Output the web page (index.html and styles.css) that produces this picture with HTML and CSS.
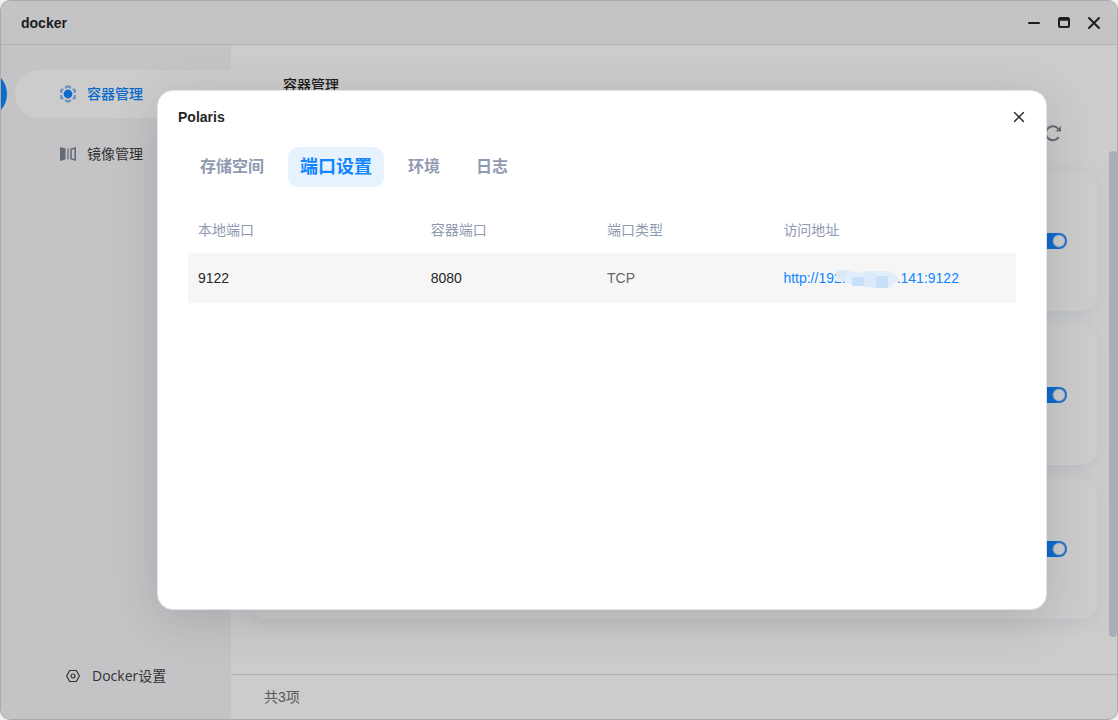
FILE: index.html
```html
<!DOCTYPE html>
<html lang="zh-CN">
<head>
<meta charset="utf-8">
<title>docker</title>
<link rel="stylesheet" href="styles.css">
</head>
<body>
<div class="window">
  <header class="titlebar">
    <h1 class="titlebar-name">docker</h1>
    <div class="titlebar-actions">
      <button class="icon-button" type="button" aria-label="最小化">
        <svg width="14" height="14" viewBox="0 0 14 14"><path d="M2 7h10" stroke="currentColor" stroke-width="2" stroke-linecap="round"/></svg>
      </button>
      <button class="icon-button" type="button" aria-label="最大化">
        <svg width="14" height="14" viewBox="0 0 14 14"><rect x="2" y="2" width="10" height="9" rx="1.5" fill="none" stroke="currentColor" stroke-width="2"/><path d="M2 3.5h10" stroke="currentColor" stroke-width="2.5"/></svg>
      </button>
      <button class="icon-button" type="button" aria-label="关闭">
        <svg width="14" height="14" viewBox="0 0 14 14"><path d="M2 2l10 10M12 2L2 12" stroke="currentColor" stroke-width="2" stroke-linecap="round"/></svg>
      </button>
    </div>
  </header>
  <div class="body">
    <nav class="sidebar">
      <a class="nav-item nav-item-active" href="#containers">
        <svg class="nav-icon" width="18" height="18" viewBox="0 0 18 18"><g fill="none" stroke="#8fbdf5" stroke-width="2.4"><path d="M6 2.900L9 1.300l3 1.600M6 15.100l3 1.600 3-1.600M2.200 8V5.200l2-1.200M15.800 8V5.200l-2-1.200M2.200 10v2.800l2 1.200M15.800 10v2.800l-2 1.200"/></g><circle cx="9" cy="9" r="4.400" fill="#1186ff"/></svg>
        容器管理
      </a>
      <a class="nav-item" href="#images">
        <svg class="nav-icon" width="18" height="18" viewBox="0 0 18 18"><path d="M1 2.500Q1 2 2 2.200l4.500 1.400v10.800L2 15.800Q1 16 1 15.500z" fill="#7f8595"/><path d="M9 3.500v11" stroke="#a5a9b5" stroke-width="1.800"/><path d="M12 4.300L16.200 3v12L12 13.700z" fill="none" stroke="#7f8595" stroke-width="1.600"/></svg>
        镜像管理
      </a>
      <a class="nav-settings" href="#settings">
        <svg width="16" height="16" viewBox="0 0 16 16" fill="none" stroke="currentColor" stroke-width="1.200"><path d="M4.700 2.500h6.600L14.400 8l-3.100 5.500H4.700L1.600 8z" stroke-linejoin="round"/><circle cx="8" cy="8" r="2"/></svg>
        Docker设置
      </a>
    </nav>
    <main class="content">
      <div class="content-head">
        <h2 class="content-title">容器管理</h2>
        <button class="refresh" type="button" aria-label="刷新">
          <svg width="18" height="18" viewBox="0 0 18 18"><path d="M14.800 13A7 7 0 1 1 14.500 5" fill="none" stroke="currentColor" stroke-width="2"/><path d="M17 2v5.500h-5.500z" fill="currentColor"/></svg>
        </button>
      </div>
      <div class="cards">
        <section class="card"><input class="switch" type="checkbox" role="switch" aria-label="容器 1" checked></section>
        <section class="card"><input class="switch" type="checkbox" role="switch" aria-label="容器 2" checked></section>
        <section class="card"><input class="switch" type="checkbox" role="switch" aria-label="容器 3" checked></section>
      </div>
      <footer class="content-foot">共3项</footer>
      <div class="scrollbar"></div>
    </main>
  </div>
</div>

<div class="overlay">
  <div class="dialog" role="dialog" aria-labelledby="dialog-title">
    <header class="dialog-head">
      <h2 class="dialog-title" id="dialog-title">Polaris</h2>
      <button class="icon-button" type="button" aria-label="关闭">
        <svg width="14" height="14" viewBox="0 0 14 14"><path d="M2.500 2.500l9 9M11.500 2.500l-9 9" stroke="currentColor" stroke-width="1.400" stroke-linecap="round"/></svg>
      </button>
    </header>
    <div class="tabs" role="tablist">
      <button class="tab" type="button" role="tab">存储空间</button>
      <button class="tab tab-active" type="button" role="tab" aria-selected="true">端口设置</button>
      <button class="tab" type="button" role="tab">环境</button>
      <button class="tab" type="button" role="tab">日志</button>
    </div>
    <table class="ports">
      <colgroup><col class="col-local"><col class="col-mid"><col class="col-mid"><col></colgroup>
      <thead>
        <tr><th>本地端口</th><th>容器端口</th><th>端口类型</th><th>访问地址</th></tr>
      </thead>
      <tbody>
        <tr>
          <td>9122</td><td>8080</td><td class="muted">TCP</td>
          <td><a class="address" href="#open">http://192.<svg class="mosaic" width="63" height="18" viewBox="0 0 63 18"><path d="M0 0h10l12 3h4V1h26l6 3 5 5-5 4-4 4-17 1-12-3H16L8 11 0 12z" fill="#e2edfa"/><path d="M4 0h6v7H0V2z" fill="#dde8f5"/><path d="M16 7h12v9H16zM40 6h12v12H40z" fill="#c9e0fb"/><path d="M28 3h12v14H28z" fill="#dce9fa"/></svg>.141:9122</a></td>
        </tr>
      </tbody>
    </table>
  </div>
</div>
</body>
</html>
```
FILE: styles.css
```css
* {
  box-sizing: border-box;
}

body {
  margin: 0;
  height: 100vh;
  background: #f0f0f0;
  color: #262626;
  font: 14px/20px "Liberation Sans", "Noto Sans CJK SC", sans-serif;
}

h1,
h2 {
  margin: 0;
  font-size: 14px;
  font-weight: bold;
}

a {
  text-decoration: none;
}

svg {
  display: block;
}

button {
  padding: 0;
  border: 0;
  background: none;
  color: inherit;
  font: inherit;
}

.window {
  display: flex;
  flex-direction: column;
  height: 100vh;
  overflow: hidden;
  border: 1px solid #d5d5d7;
  border-radius: 10px;
  background: #fff;
}

.titlebar {
  display: flex;
  align-items: center;
  justify-content: space-between;
  height: 44px;
  padding: 0 16px 0 20px;
  border-bottom: 1px solid #dedee0;
  background: #f5f5f8;
}

.titlebar-actions {
  display: flex;
  gap: 16px;
}

.icon-button {
  width: 14px;
  height: 14px;
}

.body {
  display: flex;
  flex: 1;
  min-height: 0;
}

.sidebar {
  position: relative;
  display: flex;
  flex-direction: column;
  gap: 12px;
  width: 230px;
  overflow: hidden;
  padding: 25px 0 23px 14px;
  background: #f5f5f8;
}

.nav-item {
  display: flex;
  align-items: center;
  gap: 10px;
  height: 48px;
  padding-left: 44px;
  border-radius: 24px 0 0 24px;
  color: #404040;
}

.nav-item-active {
  background: #fff;
  color: #1186ff;
  font-weight: 500;
}

.nav-item-active::before {
  content: "";
  position: absolute;
  left: -42px;
  width: 48px;
  height: 48px;
  border-radius: 50%;
  background: #1186ff;
}

.nav-settings {
  display: flex;
  align-items: center;
  gap: 11px;
  height: 40px;
  margin-top: auto;
  padding-left: 50px;
  color: #404040;
  font-family: "Open Sans", "Noto Sans CJK SC", sans-serif;
}

.content {
  position: relative;
  display: flex;
  flex: 1;
  flex-direction: column;
  min-width: 0;
}

.content-head {
  display: flex;
  flex-direction: column;
  gap: 29px;
  padding: 30px 55px 29px 52px;
}

.content-title {
  font-weight: 500;
}

.refresh {
  align-self: flex-end;
  width: 18px;
  height: 18px;
  color: #7f8595;
}

.cards {
  display: flex;
  flex: 1;
  flex-direction: column;
  gap: 14px;
  min-height: 0;
  padding: 0 20px;
}

.card {
  display: flex;
  align-items: center;
  justify-content: flex-end;
  height: 140px;
  padding: 0 30px;
  border-radius: 16px;
  background: #fff;
  box-shadow: 0 4px 16px rgba(110, 130, 180, 0.12);
}

.switch {
  appearance: none;
  width: 32px;
  height: 16px;
  margin: 0;
  border-radius: 8px;
  background: radial-gradient(circle at 24px 8px, #fff 5px, #1186ff 7px);
}

.content-foot {
  height: 45px;
  padding: 12px 33px;
  border-top: 1px solid #dedee0;
  color: #707070;
}

.scrollbar {
  position: absolute;
  top: 106px;
  right: 0;
  bottom: 82px;
  width: 8px;
  border-radius: 4px;
  background: #d6dae6;
}

.overlay {
  position: absolute;
  inset: 0;
  display: flex;
  overflow: hidden;
  padding: 90px 71px 110px 157px;
  border-radius: 10px;
  background: rgba(0, 0, 0, 0.2);
}

.dialog {
  flex: 1;
  padding: 0 30px;
  border: 1px solid #e2e2f0;
  border-radius: 16px;
  background: #fff;
  box-shadow: 0 10px 50px rgba(0, 0, 0, 0.14);
}

.dialog-head {
  display: flex;
  align-items: center;
  justify-content: space-between;
  height: 52px;
  margin: 0 -10px;
}

.tabs {
  display: flex;
  gap: 12px;
  padding-top: 4px;
}

.tab {
  height: 40px;
  padding: 0 12px;
  border-radius: 10px;
  color: #909ab0;
  font-size: 16px;
  font-weight: bold;
}

.tab-active {
  background: #e7f2ff;
  color: #1186ff;
  font-size: 18px;
  font-weight: bold;
}

.ports {
  width: 100%;
  margin-top: 20px;
  border-collapse: collapse;
  table-layout: fixed;
  text-align: left;
}

.col-local {
  width: 28.1%;
}

.col-mid {
  width: 21.3%;
}

.ports th {
  height: 46px;
  padding: 0 10px;
  color: #909ab0;
  font-weight: normal;
}

.ports td {
  height: 50px;
  padding: 0 10px;
  background: #f6f6f6;
}

.ports .muted {
  color: #666;
}

.address {
  color: #1186ff;
  white-space: nowrap;
}

.mosaic {
  display: inline-block;
  margin: 0 -2px 0 -10px;
  vertical-align: middle;
}
```
